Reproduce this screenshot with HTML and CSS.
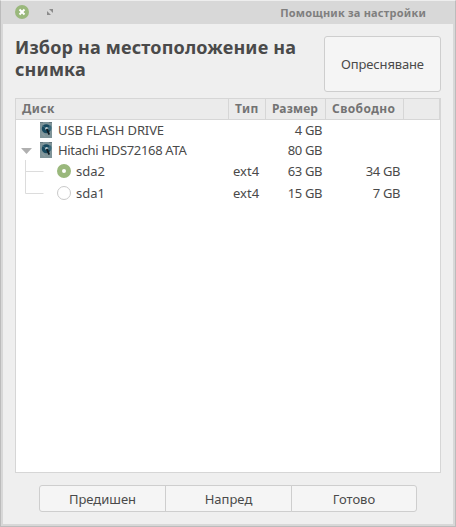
FILE: index.html
```
<!DOCTYPE html>
<html lang="bg">
<head>
<meta charset="utf-8">
<title>Помощник за настройки</title>
<link rel="stylesheet" href="styles.css">
</head>
<body>
<svg class="defs" width="0" height="0" aria-hidden="true">
  <symbol id="disk" viewBox="0 0 12 16">
    <rect width="12" height="16" fill="#7f9499"/>
    <path d="M0 0h3v1H0zM9 0h3v1H9z" fill="#66797f"/>
    <circle cx="6.3" cy="6.7" r="4.5" fill="#17495f"/>
    <path d="M6 7L10.6 3.2a5 5 0 0 1 .2 5.4z" fill="#3d6c7d"/>
    <path d="M6 6.2L2.6 3.9" stroke="#386678"/>
    <circle cx="6.7" cy="6.5" r="1.5" fill="#c0cdd0"/>
    <path d="M6.8 6.8L9.2 12.6" stroke="#101c22" stroke-width="1.8"/>
    <path d="M2 11.5l3 3" stroke="#94a5a9"/>
  </symbol>
</svg>
<div class="window">
  <header class="titlebar">
    <svg class="close" width="14" height="14" viewBox="0 0 14 14"><circle cx="7" cy="7" r="7" fill="#9ab87c"/><path d="M4.5 4.5l5 5M9.5 4.5l-5 5" stroke="#fff" stroke-width="2"/></svg>
    <svg class="maximize" width="6" height="6" viewBox="0 0 6 6"><path d="M2 0h4v4zM0 2v4h4z" fill="#8b8b8b"/></svg>
    <span class="caption">Помощник за настройки</span>
  </header>
  <main class="content">
    <div class="top">
      <h1>Избор на местоположение на<br>снимка</h1>
      <button class="refresh">Опресняване</button>
    </div>
    <div class="table">
      <div class="row head"><span class="disk">Диск</span><span class="type">Тип</span><span class="size">Размер</span><span class="free">Свободно</span><span></span></div>
      <div class="row"><span class="name device"><svg class="icon" width="12" height="16"><use href="#disk"/></svg><span class="usb">USB FLASH DRIVE</span></span><span></span><span class="num">4 GB</span><span class="num"></span></div>
      <div class="row"><span class="name device"><svg class="arrow" width="11" height="6" viewBox="0 0 11 6"><path d="M0 0h11L5.5 6z" fill="#b0b0b0"/></svg><svg class="icon" width="12" height="16"><use href="#disk"/></svg><span class="hitachi">Hitachi HDS72168 ATA</span></span><span></span><span class="num">80 GB</span><span class="num"></span></div>
      <div class="row part"><span class="name"><svg class="branch" width="19" height="22" viewBox="0 0 19 22"><path d="M.5 0v22M.5 11.5h18" fill="none" stroke="#dcdcdc"/></svg><i class="radio on"></i>sda2</span><span class="fs">ext4</span><span class="num">63 GB</span><span class="num">34 GB</span></div>
      <div class="row part"><span class="name"><svg class="branch" width="19" height="22" viewBox="0 0 19 22"><path d="M.5 0v11.5h18" fill="none" stroke="#dcdcdc"/></svg><i class="radio"></i>sda1</span><span class="fs">ext4</span><span class="num">15 GB</span><span class="num">7 GB</span></div>
    </div>
    <footer class="buttons">
      <button>Предишен</button><button>Напред</button><button>Готово</button>
    </footer>
  </main>
</div>
</body>
</html>
```
FILE: styles.css
```
* { box-sizing: border-box; }
body { margin: 0; font: 13px/20px "Noto Sans", sans-serif; color: #4a4a4a; }
.defs { position: absolute; }
.window {
  height: 527px;
  display: flex;
  flex-direction: column;
  background: #d8d8d8;
  border: 1px solid #bcbcbc;
  border-top-color: #eee;
  padding: 0 2px 2px;
}
.titlebar {
  height: 23px;
  display: flex;
  align-items: center;
  padding: 0 27px 0 12px;
  flex: none;
}
.close { margin-top: -1px; }
.maximize { margin-left: 18px; margin-top: -1px; }
.caption {
  margin-left: auto;
  font-size: 11px;
  font-weight: 700;
  letter-spacing: .2px;
  color: #7f7f7f;
}
.content {
  flex: 1;
  background: #efefef;
  padding: 12px 12px;
}
.top { display: flex; justify-content: space-between; height: 62px; }
h1 { margin: 0; font-size: 18px; line-height: 22px; white-space: nowrap; letter-spacing: .17px; }
button {
  font: inherit;
  color: inherit;
  background: #f5f5f5;
  border: 1px solid #cecece;
  border-radius: 3px;
  padding: 0;
}
.refresh { width: 117px; height: 56px; letter-spacing: -.15px; }
.table {
  height: 375px;
  background: #fff;
  border: 1px solid #d6d6d6;
}
.row {
  display: grid;
  grid-template-columns: 213px 37px 60px 78px 36px;
  height: 20px;
  line-height: 20px;
  white-space: nowrap;
}
.head {
  height: 21px;
  background: #ebebeb;
  border-bottom: 1px solid #d6d6d6;
  font-weight: 700;
  font-size: 12px;
  letter-spacing: .4px;
  color: #737373;
}
.head span { border-right: 1px solid #d6d6d6; padding-left: 6px; }
.head .size { letter-spacing: .15px; }
.part { height: 22px; line-height: 22px; }
.name { display: flex; align-items: center; }
.device { padding-left: 6px; position: relative; }
.arrow { position: absolute; left: 5px; top: 8px; }
.icon { margin: 0 6px 0 18px; }
.usb { letter-spacing: -.1px; }
.hitachi { letter-spacing: -.32px; }
.branch { margin-left: 9px; }
.radio {
  width: 14px;
  height: 14px;
  margin: 0 5px 0 13px;
  border: 1px solid #c9c9c9;
  border-radius: 50%;
}
.radio.on { border: 5px solid #9ab87c; }
.fs { padding-left: 4px; }
.num { text-align: right; padding-right: 4px; letter-spacing: -.4px; }
.buttons { display: flex; width: 378px; margin: 12px auto 0; }
.buttons button { width: 127px; height: 27px; border-radius: 0; }
.buttons button + button { margin-left: -1px; }
.buttons button:first-child { border-radius: 3px 0 0 3px; }
.buttons button:last-child { width: 126px; border-radius: 0 3px 3px 0; }
```
